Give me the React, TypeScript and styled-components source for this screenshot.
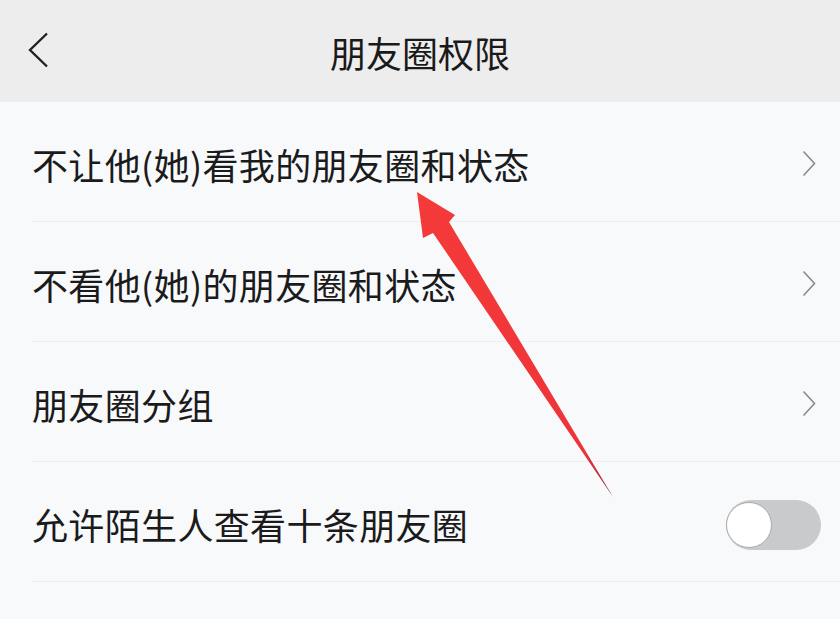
import React from "react";
import styled, { createGlobalStyle } from "styled-components";

const Global = createGlobalStyle`
  html, body { margin: 0; padding: 0; background: #f8f9fb; }
  body { font-family: "Noto Sans CJK SC", "Noto Sans", sans-serif; }
`;

const Page = styled.div`
  position: relative;
  width: 840px;
  height: 619px;
  overflow: hidden;
  background: #f8f9fb;
`;

const Header = styled.header`
  height: 102px;
  background: #ededed;
  display: grid;
  grid-template-columns: 1fr auto 1fr;
  align-items: center;
  padding-left: 27px;
  padding-right: 27px;
  box-sizing: border-box;
`;

const BackButton = styled.div`
  display: flex;
  align-items: center;
  height: 36px;
  margin-top: -3px;
`;

const Title = styled.h1`
  margin: 0;
  font-size: 36px;
  font-weight: 400;
  color: #1a1a1a;
  line-height: 1;
  margin-top: 2px;
`;

const List = styled.div`
  display: flex;
  flex-direction: column;
`;

const Row = styled.div`
  padding-left: 32px;
`;

const RowInner = styled.div<{ $pr: number }>`
  height: 120px;
  box-sizing: border-box;
  border-bottom: 1px solid #eceef1;
  display: flex;
  align-items: center;
  justify-content: space-between;
  padding-right: ${(p) => p.$pr}px;
`;

const Label = styled.span`
  font-size: 36px;
  color: #1b1b1b;
  line-height: 1;
  letter-spacing: 0.35px;
  margin-top: 4px;
`;

const Chevron = styled.svg`
  display: block;
  margin-top: 4px;
`;

const Switch = styled.div`
  width: 95px;
  height: 50px;
  border-radius: 25px;
  background: #c9cacc;
  box-sizing: border-box;
  padding: 2px;
  display: flex;
  align-items: center;
  margin-top: 6px;
`;

const Knob = styled.div`
  width: 46px;
  height: 46px;
  border-radius: 50%;
  background: #ffffff;
  box-sizing: border-box;
  border: 1px solid #a9abae;
  margin-left: -2px;
`;

const Overlay = styled.svg`
  position: absolute;
  left: 0;
  top: 0;
  pointer-events: none;
`;

const ChevronRight = () => (
  <Chevron width="14" height="27" viewBox="0 0 14 27">
    <polyline points="1.5,1.5 12.5,13.5 1.5,25.5" fill="none" stroke="#8a8a8c" strokeWidth="1.6" strokeLinejoin="miter" />
  </Chevron>
);

const items = [
  { label: "不让他(她)看我的朋友圈和状态", type: "link" },
  { label: "不看他(她)的朋友圈和状态", type: "link" },
  { label: "朋友圈分组", type: "link" },
  { label: "允许陌生人查看十条朋友圈", type: "switch" },
];

export default function App() {
  return (
    <>
      <Global />
      <Page>
        <Header>
          <BackButton>
            <svg width="22" height="36" viewBox="0 0 22 36">
              <polyline points="20,1.5 3,18 20,34.5" fill="none" stroke="#222" strokeWidth="2.4" />
            </svg>
          </BackButton>
          <Title>朋友圈权限</Title>
          <div />
        </Header>
        <List>
          {items.map((it) => (
            <Row key={it.label}>
              <RowInner $pr={it.type === "switch" ? 19 : 24}>
                <Label>{it.label}</Label>
                {it.type === "switch" ? (
                  <Switch>
                    <Knob />
                  </Switch>
                ) : (
                  <ChevronRight />
                )}
              </RowInner>
            </Row>
          ))}
        </List>
        <Overlay width="840" height="619" viewBox="0 0 840 619">
          <defs>
            <linearGradient id="ag" x1="417" y1="192" x2="613" y2="497" gradientUnits="userSpaceOnUse">
              <stop offset="0" stopColor="#f53a3a" />
              <stop offset="0.85" stopColor="#ee3438" />
              <stop offset="1" stopColor="#8a2a3a" />
            </linearGradient>
          </defs>
          <polygon
            points="417,192 455,215 449,222 613,497 433,233 423,238"
            fill="url(#ag)"
          />
        </Overlay>
      </Page>
    </>
  );
}
